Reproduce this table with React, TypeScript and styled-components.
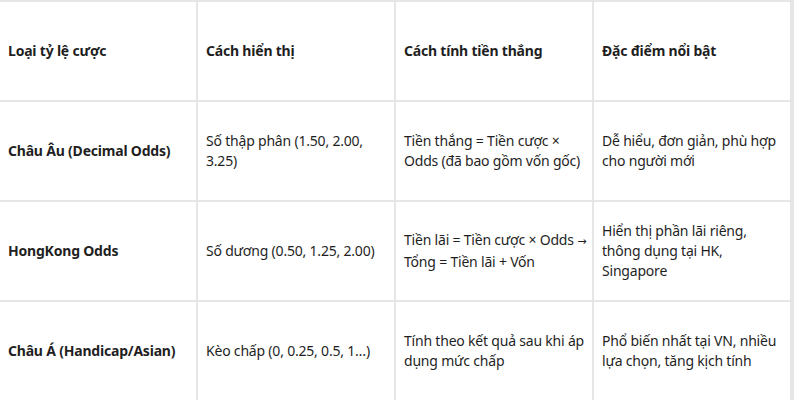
import React from 'react'
import styled, { createGlobalStyle } from 'styled-components'

const GlobalStyle = createGlobalStyle`
  html, body {
    margin: 0;
    padding: 0;
    background: #ffffff;
  }
  body {
    font-family: 'Noto Sans', 'Open Sans', sans-serif;
    color: #1f1f1f;
  }
`

const Grid = styled.div`
  display: grid;
  grid-template-columns: repeat(4, 196px);
  grid-auto-rows: 98px;
  gap: 2px;
  padding: 2px 0 0 0;
  width: 792px;
  background: #e6e6e6;
  border-right: 2px solid #e6e6e6;
  border-bottom: 2px solid #e6e6e6;
`

const Cell = styled.div<{ $head?: boolean; $first?: boolean }>`
  background: #ffffff;
  display: flex;
  align-items: center;
  padding: 0 2px 0 8px;
  font-size: 14px;
  line-height: 20px;
  font-weight: ${(p) => (p.$head || p.$first ? 700 : 400)};
  letter-spacing: -0.2px;
`

const Arrow = styled.span`
  font-family: 'DejaVu Sans', sans-serif;
  font-size: 11px;
  letter-spacing: 0;
`

const headers = ['Loại tỷ lệ cược', 'Cách hiển thị', 'Cách tính tiền thắng', 'Đặc điểm nổi bật']

const rows: React.ReactNode[][] = [
  [
    'Châu Âu (Decimal Odds)',
    'Số thập phân (1.50, 2.00, 3.25)',
    'Tiền thắng = Tiền cược × Odds (đã bao gồm vốn gốc)',
    'Dễ hiểu, đơn giản, phù hợp cho người mới'
  ],
  [
    'HongKong Odds',
    'Số dương (0.50, 1.25, 2.00)',
    <span>
      Tiền lãi = Tiền cược × Odds{'\u00a0'}
      <Arrow>→</Arrow> Tổng = Tiền lãi + Vốn
    </span>,
    'Hiển thị phần lãi riêng, thông dụng tại HK, Singapore'
  ],
  [
    'Châu Á (Handicap/Asian)',
    'Kèo chấp (0, 0.25, 0.5, 1…)',
    'Tính theo kết quả sau khi áp dụng mức chấp',
    'Phổ biến nhất tại VN, nhiều lựa chọn, tăng kịch tính'
  ]
]

export default function App() {
  return (
    <>
      <GlobalStyle />
      <Grid>
        {headers.map((h) => (
          <Cell key={h} $head>
            {h}
          </Cell>
        ))}
        {rows.map((row, r) =>
          row.map((content, i) => (
            <Cell key={`${r}-${i}`} $first={i === 0}>
              {content}
            </Cell>
          ))
        )}
      </Grid>
    </>
  )
}
